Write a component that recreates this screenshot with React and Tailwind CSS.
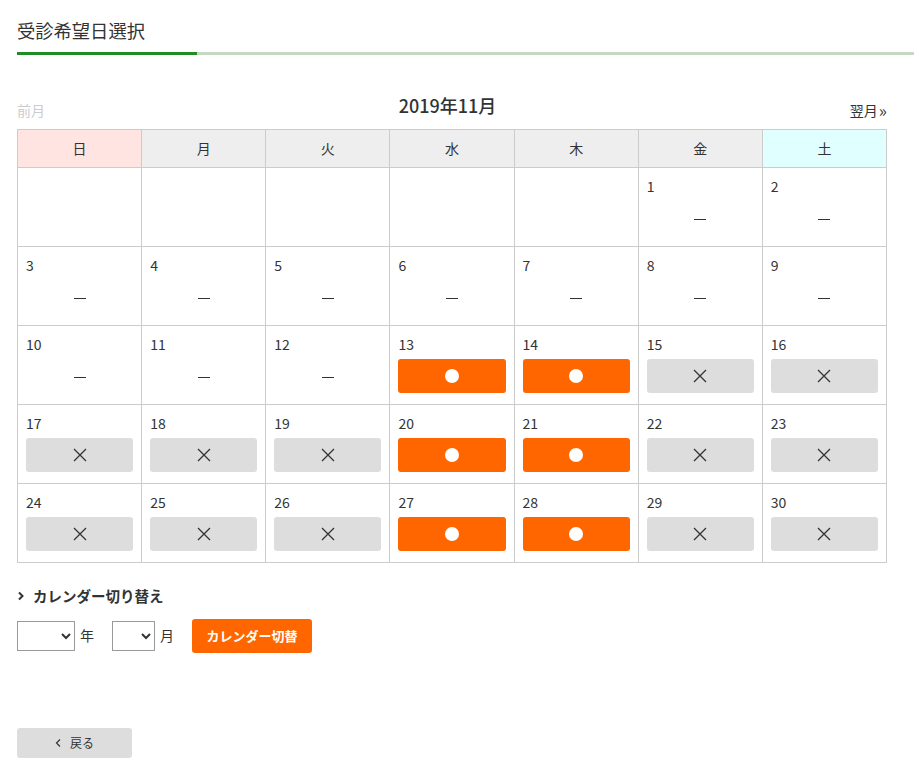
import React from 'react'

const weekdays = [
  { label: '日', bg: 'bg-[#ffe4e1]' },
  { label: '月', bg: 'bg-[#eeeeee]' },
  { label: '火', bg: 'bg-[#eeeeee]' },
  { label: '水', bg: 'bg-[#eeeeee]' },
  { label: '木', bg: 'bg-[#eeeeee]' },
  { label: '金', bg: 'bg-[#eeeeee]' },
  { label: '土', bg: 'bg-[#e0ffff]' },
]

// status: 'none' = 受付なし, 'open' = 予約可, 'full' = 満
const open = [13, 14, 20, 21, 27, 28]

function statusOf(day) {
  if (day <= 12) return 'none'
  if (open.includes(day)) return 'open'
  return 'full'
}

function buildWeeks() {
  const cells = [null, null, null, null, null]
  for (let d = 1; d <= 30; d++) cells.push(d)
  const weeks = []
  for (let i = 0; i < cells.length; i += 7) weeks.push(cells.slice(i, i + 7))
  return weeks
}

function DayCell({ day }) {
  if (!day) return <td className="border border-[#cccccc] h-[79px]" />
  const status = statusOf(day)
  return (
    <td className="border border-[#cccccc] h-[79px] align-top px-2 pt-[8px]">
      <div className="text-[14px] leading-[20px] text-[#333]">{day}</div>
      {status === 'none' && (
        <div className="h-[34px] mt-[6px] flex items-center justify-center text-[14px] text-[#333]">
          <span className="block w-[12px] h-px bg-[#333]" />
        </div>
      )}
      {status === 'open' && (
        <button className="w-full h-[34px] mt-[5px] rounded-[3px] bg-[#ff6600] flex items-center justify-center">
          <span className="block w-[14px] h-[14px] rounded-full bg-white" />
        </button>
      )}
      {status === 'full' && (
        <button className="w-full h-[34px] mt-[5px] rounded-[3px] bg-[#dddddd] flex items-center justify-center">
          <svg width="14" height="14" viewBox="0 0 14 14" fill="none" stroke="#333" strokeWidth="1.3">
            <path d="M1 1L13 13M13 1L1 13" />
          </svg>
        </button>
      )}
    </td>
  )
}

export default function App() {
  const weeks = buildWeeks()

  return (
    <div className="w-[914px] min-h-[773px] bg-white text-[#333] font-['Noto_Sans_CJK_JP','Noto_Sans',sans-serif] overflow-hidden">
      <div className="pt-[16px]">
        <h1 className="pl-[17px] text-[18.3px] leading-[28px] font-normal text-[#333]">受診希望日選択</h1>
        <div className="mt-[8px] ml-[17px] flex h-[3px]">
          <div className="w-[180px] bg-[#228b22]" />
          <div className="flex-1 bg-[#c4d8c2]" />
        </div>
      </div>

      <div className="px-[17px] w-[904px]">
        <div className="mt-[38px] flex items-end justify-between">
          <span className="text-[14px] leading-[20px] text-[#cccccc] mb-[-3px]">前月</span>
          <span className="text-[18px] leading-[24px] font-medium text-[#333]">2019年11月</span>
          <span className="text-[14px] leading-[20px] text-[#333] mb-[-3px] flex items-center">
            翌月<span className="text-[17px] leading-[20px] ml-[1px]">»</span>
          </span>
        </div>

        <table className="mt-[12px] w-[870px] border-collapse table-fixed">
          <thead>
            <tr>
              {weekdays.map((w) => (
                <th
                  key={w.label}
                  className={`${w.bg} border border-[#cccccc] h-[38px] text-[14px] font-normal text-[#333]`}
                >
                  {w.label}
                </th>
              ))}
            </tr>
          </thead>
          <tbody>
            {weeks.map((week, i) => (
              <tr key={i}>
                {week.map((day, j) => (
                  <DayCell key={j} day={day} />
                ))}
              </tr>
            ))}
          </tbody>
        </table>

        <div className="mt-[22px] flex items-center gap-[8px] text-[14.5px] font-bold">
          <svg width="8" height="10" viewBox="0 0 8 10" fill="none" stroke="#333" strokeWidth="2">
            <path d="M2 1.5L5.5 5L2 8.5" />
          </svg>
          <span>カレンダー切り替え</span>
        </div>

        <div className="mt-[12px] flex items-center text-[14px]">
          <select className="w-[58px] h-[30px] border border-[#999] bg-white text-[13px]">
            <option></option>
          </select>
          <span className="ml-[5px]">年</span>
          <select className="ml-[18px] w-[43px] h-[30px] border border-[#999] bg-white text-[13px]">
            <option></option>
          </select>
          <span className="ml-[5px]">月</span>
          <button className="ml-[18px] h-[34px] w-[120px] rounded-[3px] bg-[#ff6600] text-white text-[13px] font-bold">
            カレンダー切替
          </button>
        </div>

        <button className="mt-[75px] w-[115px] h-[30px] rounded-[3px] bg-[#dddddd] flex items-center justify-center gap-[8px] text-[12px] text-[#333]">
          <svg width="7" height="10" viewBox="0 0 7 10" fill="none" stroke="#333" strokeWidth="1.2">
            <path d="M5 1.5L1.5 5L5 8.5" />
          </svg>
          <span>戻る</span>
        </button>
      </div>
    </div>
  )
}
